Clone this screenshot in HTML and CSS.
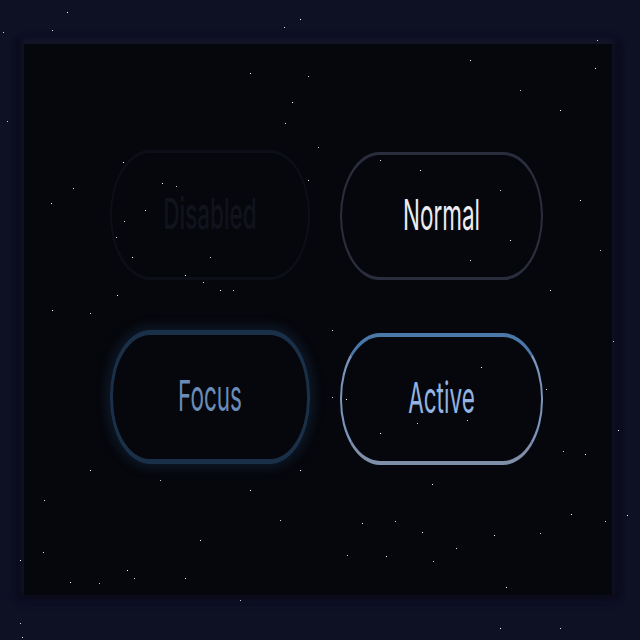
FILE: index.html
```html
<!DOCTYPE html>
<html lang="en">
<head>
<meta charset="utf-8">
<title>Button states</title>
<link rel="stylesheet" href="styles.css">
</head>
<body>
<div class="stars"></div>
<main class="panel">
  <div class="grid">
    <button class="btn btn-disabled" disabled><span class="label">Disabled</span></button>
    <button class="btn btn-normal"><span class="label">Normal</span></button>
    <button class="btn btn-focus"><span class="label">Focus</span></button>
    <button class="btn btn-active"><span class="label">Active</span></button>
  </div>
</main>
</body>
</html>
```
FILE: styles.css
```css
html, body {
  margin: 0;
  padding: 0;
}
body {
  width: 640px;
  height: 640px;
  background: #0e1024;
  box-sizing: border-box;
  padding: 44px 28px 45px 24px;
  font-family: Inter, "Noto Sans", sans-serif;
  overflow: hidden;
  position: relative;
}
.panel {
  height: 100%;
  background: #06070c;
  box-shadow: 0 -4px 6px 2px #15152a, -4px 0 6px 2px #0a0b18, 4px 0 6px 2px #0a0b18, 0 4px 8px 2px #121328;
  box-sizing: border-box;
  padding: 106px 0 0 86px;
}
.grid {
  display: grid;
  grid-template-columns: 200px 203px;
  grid-template-rows: 130px 132px;
  column-gap: 30px;
  row-gap: 53px;
}
.btn {
  box-sizing: border-box;
  width: 100%;
  height: 100%;
  background: transparent;
  border-radius: 40px / 65px;
  font-family: inherit;
  font-size: 22.5px;
  font-weight: 400;
  padding: 0 0 5px;
  display: flex;
  align-items: center;
  justify-content: center;
}
.label {
  display: inline-block;
  transform: scaleY(1.9);
}
.btn-disabled {
  border: 2px solid #0d0f18;
  border-top-width: 3px;
  border-bottom-width: 3px;
  color: #11131d;
  font-weight: 500;
}
.btn-normal {
  border: 2px solid #2a2d3b;
  border-top-width: 3px;
  border-bottom-width: 3px;
  color: #ececf2;
  margin-top: 2px;
  height: 128px;
}
.btn-focus {
  border: 3px solid #1a3049;
  border-top-width: 5px;
  border-bottom-width: 5px;
  box-shadow: 0 0 12px 3px rgba(35, 80, 125, 0.28);
  color: #6a8cb8;
  height: 134px;
  margin-top: -3px;
}
.btn-active {
  border: 2px solid #7a94bb;
  border-top: 4px solid #4a78a8;
  border-bottom: 4px solid #7f8fa8;
  color: #93b3e2;
}
.stars {
  position: absolute;
  left: 0;
  top: 0;
  width: 1px;
  height: 1px;
  background: transparent;
  z-index: 5;
  box-shadow:
    67px 12px #fff, 52px 30px #ddd, 3px 32px #ccc, 284px 27px #ddd, 300px 19px #fff,
    250px 73px #fff, 308px 76px #ccc, 292px 102px #fff, 285px 123px #ddd, 7px 121px #ccc,
    123px 162px #fff, 73px 188px #ddd, 51px 203px #fff, 162px 183px #fff, 176px 186px #ccc,
    145px 210px #fff, 116px 237px #ddd, 132px 257px #fff, 210px 257px #ccc, 185px 275px #fff,
    203px 282px #ddd, 220px 290px #fff, 233px 290px #ccc, 52px 310px #fff, 90px 313px #ddd,
    308px 180px #fff, 318px 147px #ccc, 124px 221px #ddd, 117px 295px #fff,
    332px 330px #ddd, 346px 399px #fff, 332px 397px #ccc, 380px 433px #fff, 417px 423px #ddd,
    432px 484px #fff, 467px 420px #ccc, 481px 367px #fff, 546px 389px #ddd, 585px 454px #fff,
    563px 451px #ccc, 618px 430px #fff, 605px 521px #ddd, 571px 514px #fff, 540px 533px #ccc,
    494px 535px #fff, 456px 548px #ddd, 386px 556px #fff, 347px 555px #ccc, 362px 523px #fff,
    395px 521px #ddd, 422px 532px #fff, 433px 561px #ccc, 506px 587px #fff, 560px 628px #ddd,
    500px 628px #fff, 613px 341px #ccc, 627px 515px #fff, 20px 560px #fff, 43px 552px #ddd,
    70px 582px #fff, 99px 583px #ccc, 127px 570px #fff, 134px 578px #ddd, 185px 578px #fff,
    20px 623px #ccc, 22px 637px #fff, 44px 500px #ddd, 90px 470px #fff, 160px 480px #ccc,
    250px 490px #fff, 280px 520px #ddd, 200px 540px #fff, 240px 600px #ccc, 300px 470px #fff,
    560px 110px #fff, 597px 40px #ddd, 595px 68px #fff, 520px 90px #ccc, 470px 60px #fff,
    380px 160px #ddd, 420px 170px #fff, 500px 190px #ccc, 510px 240px #fff, 470px 260px #ddd,
    550px 290px #fff, 600px 250px #ccc, 580px 200px #fff
  ;
}
```
